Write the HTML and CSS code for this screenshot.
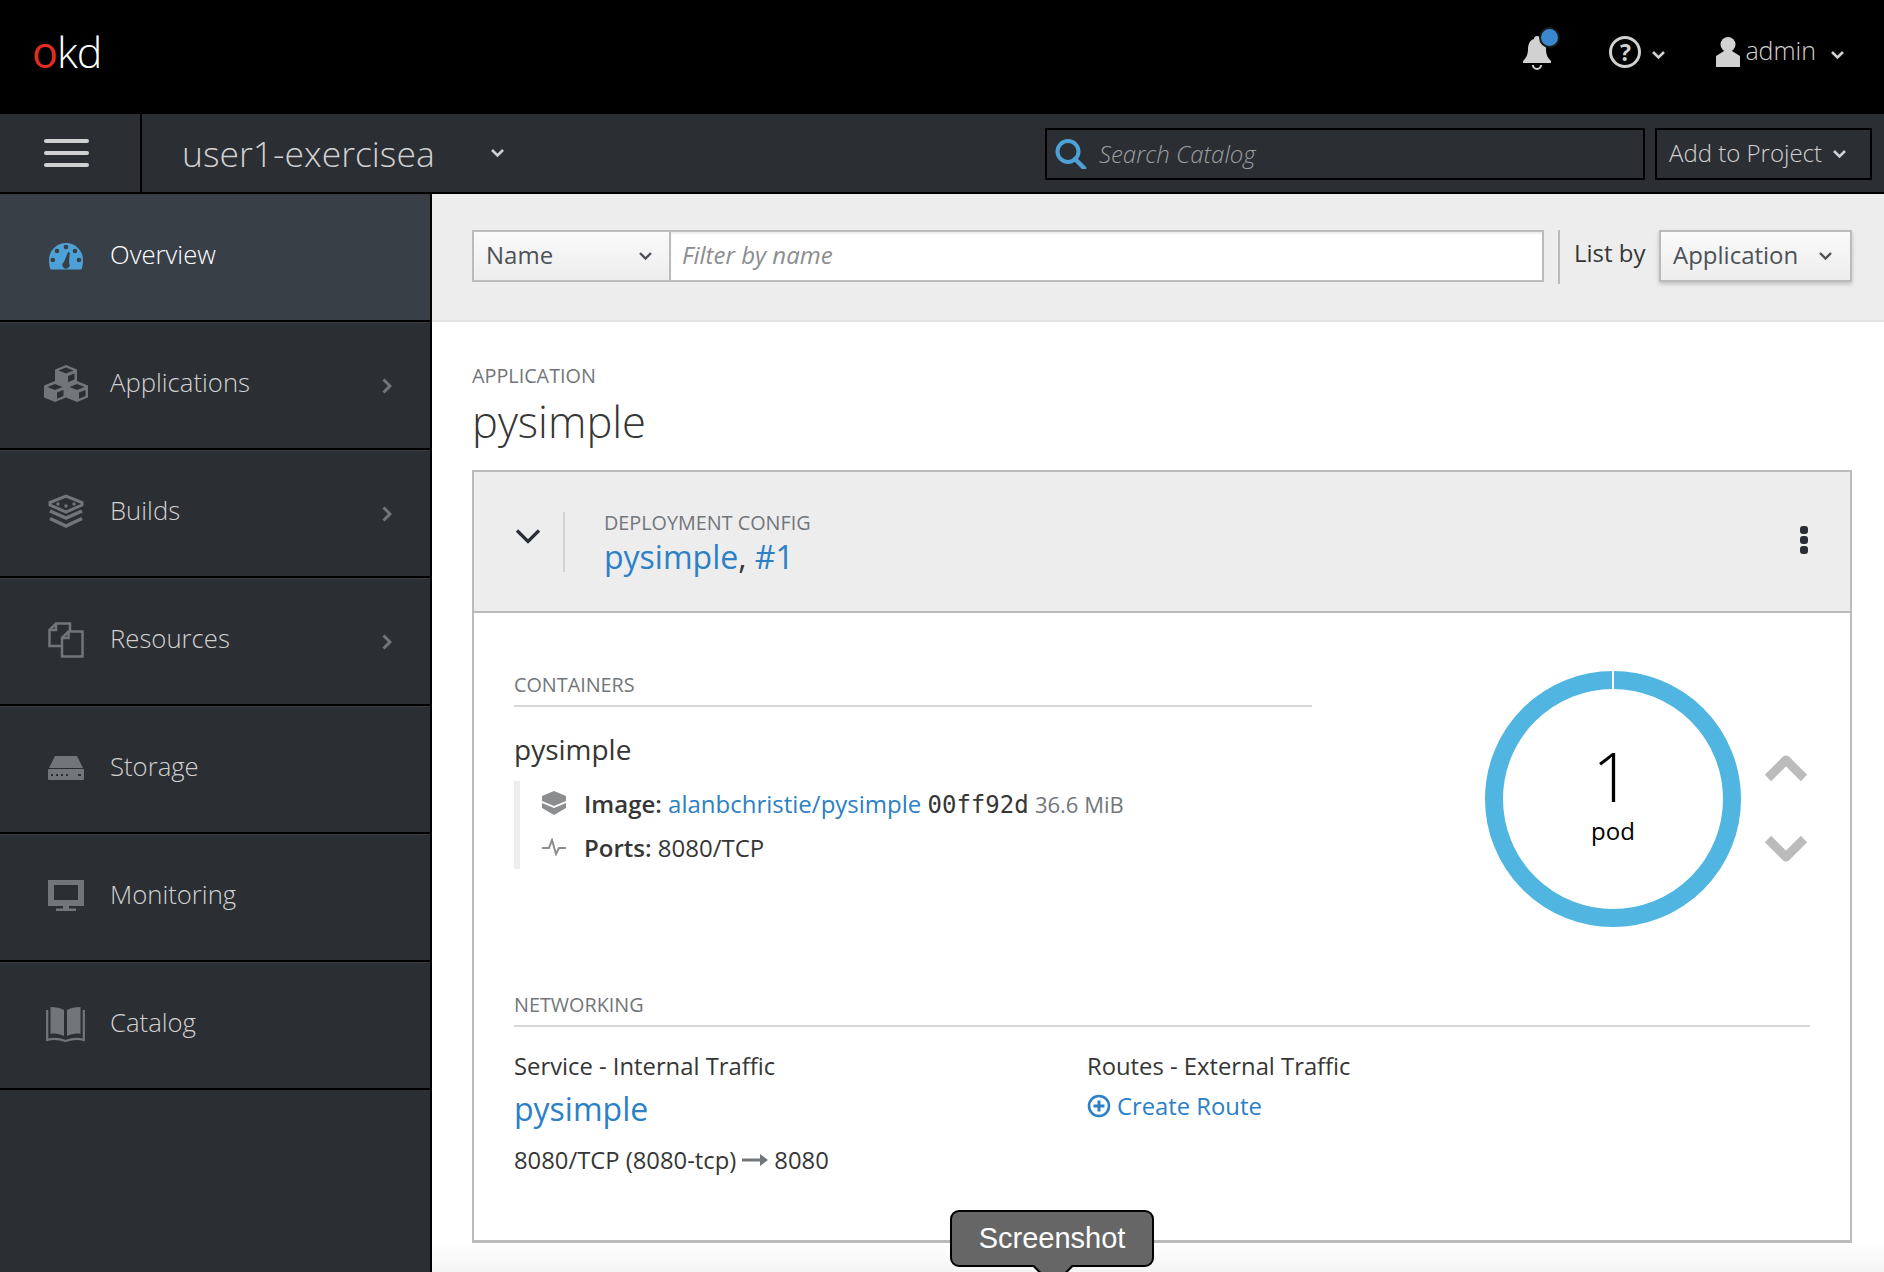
FILE: index.html
```html
<!DOCTYPE html>
<html lang="en">
<head>
<meta charset="utf-8">
<title>OKD Overview</title>
<link rel="stylesheet" href="styles.css">
</head>
<body>
<header class="topbar">
  <div class="logo"><span class="logo-o">o</span>kd</div>
  <div class="top-actions">
    <span class="bell">
      <svg width="32" height="36" viewBox="0 0 32 36"><path fill="#d1d1d1" d="M16 2c2 0 3 1 3 3 5 1 6 5 6 10 0 6 2 9 5 12v2H2v-2c3-3 5-6 5-12 0-5 2-9 6-10 0-2 1-3 3-3z"/><path fill="none" stroke="#d1d1d1" stroke-width="2" d="M12 31a4 4 0 0 0 8 0"/></svg>
      <i class="badge"></i>
    </span>
    <span class="help">
      <span class="help-q">?</span>
      <svg class="caret" width="15" height="10" viewBox="0 0 15 10"><path d="M2 2l5.500 5.500L13 2" fill="none" stroke="#d1d1d1" stroke-width="2.600"/></svg>
    </span>
    <span class="user">
      <svg width="26" height="30" viewBox="0 0 26 30"><circle cx="13" cy="7.500" r="7.500" fill="#d1d1d1"/><path fill="#d1d1d1" d="M9 14h8l8 5v11H1V19z"/></svg>
      <span class="user-name">admin</span>
      <svg class="caret" width="15" height="10" viewBox="0 0 15 10"><path d="M2 2l5.500 5.500L13 2" fill="none" stroke="#d1d1d1" stroke-width="2.600"/></svg>
    </span>
  </div>
</header>
<div class="projectbar">
  <div class="burger"><i></i><i></i><i></i></div>
  <div class="project">
    <span class="project-name">user1-exercisea</span>
    <svg width="15" height="10" viewBox="0 0 15 10"><path d="M2 2l5.500 5.500L13 2" fill="none" stroke="#d1d1d1" stroke-width="2.600"/></svg>
  </div>
  <div class="search">
    <svg width="32" height="30" viewBox="0 0 32 30"><circle cx="13" cy="12.500" r="10.500" fill="none" stroke="#4ea1d6" stroke-width="4"/><path d="M20 20l9 9" stroke="#4ea1d6" stroke-width="4.500" stroke-linecap="round"/></svg>
    <span class="search-text">Search Catalog</span>
  </div>
  <div class="add-project"><span class="add-text">Add to Project</span>
    <svg width="15" height="10" viewBox="0 0 15 10"><path d="M2 2l5.500 5.500L13 2" fill="none" stroke="#d1d1d1" stroke-width="2.600"/></svg>
  </div>
</div>
<div class="layout">
  <nav class="sidebar">
    <a class="nav-item active">
      <span class="nav-icon"><svg width="36" height="28" viewBox="0 0 36 28"><path fill="#4ea1d6" d="M18 1a17 17 0 0 1 17 17c0 3-.5 6-1 8-.3 1-1 1.500-2 1.500H4c-1 0-1.700-.5-2-1.500-.5-2-1-5-1-8A17 17 0 0 1 18 1z"/><g fill="#393f47"><circle cx="18" cy="5" r="2.300"/><circle cx="9" cy="9" r="2.300"/><circle cx="27" cy="9" r="2.300"/><circle cx="4.800" cy="18" r="2.300"/><circle cx="31" cy="18" r="2.300"/><path d="M20 10l1.800.4L21 21a3.600 3.600 0 1 1-5-1z"/></g></svg></span>
      <span class="nav-label">Overview</span>
    </a>
    <a class="nav-item">
      <span class="nav-icon"><svg width="44" height="37" viewBox="0 0 44 37"><path fill="#72767b" d="M22 0l11 4.500V16l11 4.500v12L33 37l-11-4.500L11 37 0 32.500v-12L11 16V4.500z"/><g fill="#2b2e33"><path d="M22 2.500l7.500 3L22 8.500l-7.500-3zM11 19l7.500 3L11 25l-7.500-3zM33 19l7.500 3L33 25l-7.500-3z"/><path d="M24 11l6.500-2.600v6.200L24 17.200zM13 27.500l6.500-2.600v6.200L13 33.700zM35 27.500l6.500-2.600v6.200L35 33.700z"/></g></svg></span>
      <span class="nav-label">Applications</span>
      <svg class="nav-chevron" width="10" height="16" viewBox="0 0 10 16"><path d="M1.500 1.500L8 8l-6.500 6.500" fill="none" stroke="#72767b" stroke-width="3"/></svg>
    </a>
    <a class="nav-item">
      <span class="nav-icon"><svg width="36" height="35" viewBox="0 0 36 35" fill="none" stroke="#72767b" stroke-width="3"><path d="M2 8.500L18 2l16 6.500V11l-16 7-16-7z"/><path stroke-width="3.500" d="M2 17l16 7 16-7M2 24.500L18 32l16-7.500"/><g fill="#72767b" stroke="none"><circle cx="10" cy="10" r="1.700"/><circle cx="18" cy="12" r="1.700"/><circle cx="26" cy="10" r="1.700"/></g></svg></span>
      <span class="nav-label">Builds</span>
      <svg class="nav-chevron" width="10" height="16" viewBox="0 0 10 16"><path d="M1.500 1.500L8 8l-6.500 6.500" fill="none" stroke="#72767b" stroke-width="3"/></svg>
    </a>
    <a class="nav-item">
      <span class="nav-icon"><svg width="36" height="36" viewBox="0 0 36 36" fill="none" stroke="#72767b" stroke-width="2.500"><path d="M14 24H1.500V8L8 1.500h14v8"/><path d="M8 1.500V8H1.500"/><path d="M14 16l6.500-6.500h14v25H14z"/><path d="M20.500 9.500V16H14"/></svg></span>
      <span class="nav-label">Resources</span>
      <svg class="nav-chevron" width="10" height="16" viewBox="0 0 10 16"><path d="M1.500 1.500L8 8l-6.500 6.500" fill="none" stroke="#72767b" stroke-width="3"/></svg>
    </a>
    <a class="nav-item">
      <span class="nav-icon"><svg width="36" height="24" viewBox="0 0 36 24"><path fill="#72767b" d="M7 0h22l6 12H1z"/><rect y="13" width="36" height="11" rx="1" fill="#72767b"/><g fill="#2b2e33"><rect x="3" y="18" width="2" height="2"/><rect x="8" y="18" width="2" height="2"/><rect x="13" y="18" width="2" height="2"/><rect x="18" y="18" width="2" height="2"/><rect x="30" y="18" width="3" height="2"/></g></svg></span>
      <span class="nav-label">Storage</span>
    </a>
    <a class="nav-item">
      <span class="nav-icon"><svg width="36" height="31" viewBox="0 0 36 31"><path fill="#72767b" fill-rule="evenodd" d="M0 0h36v26H0zM6 5v15h24V5z"/><rect x="15" y="25" width="6" height="4" fill="#72767b"/><rect x="8" y="28.500" width="20" height="2.500" fill="#72767b"/></svg></span>
      <span class="nav-label">Monitoring</span>
    </a>
    <a class="nav-item">
      <span class="nav-icon"><svg width="39" height="36" viewBox="0 0 39 36"><path fill="#72767b" d="M4.500 1c5 0 10.500 1 13.500 3v26c-4-2-9.500-3-13.500-2zM34.500 1c-5 0-10.500 1-13.500 3v26c4-2 9.500-3 13.500-2z"/><path fill="none" stroke="#72767b" stroke-width="2.200" d="M1.200 4v30c6-2 12.800-1 18.300 1 5.500-2 12.300-3 18.300-1V4"/></svg></span>
      <span class="nav-label">Catalog</span>
    </a>
  </nav>
  <main class="content">
    <div class="filterbar">
      <div class="filter-select"><span class="ctl-text">Name</span>
        <svg width="15" height="10" viewBox="0 0 15 10"><path d="M2 2l5.500 5.500L13 2" fill="none" stroke="#4d5258" stroke-width="2.400"/></svg>
      </div>
      <div class="filter-input"><span class="ctl-text">Filter by name</span></div>
      <div class="listby">List by</div>
      <div class="listby-btn"><span class="ctl-text">Application</span>
        <svg width="15" height="10" viewBox="0 0 15 10"><path d="M2 2l5.500 5.500L13 2" fill="none" stroke="#4d5258" stroke-width="2.400"/></svg>
      </div>
    </div>
    <div class="page">
      <div class="app-label">APPLICATION</div>
      <h1 class="app-name">pysimple</h1>
      <section class="panel">
        <div class="panel-head">
          <svg class="panel-toggle" width="26" height="17" viewBox="0 0 26 17"><path d="M2 2.500l11 11 11-11" fill="none" stroke="#292e34" stroke-width="3.200"/></svg>
          <div class="panel-title">
            <div class="dc-label">DEPLOYMENT CONFIG</div>
            <div class="dc-name"><a class="link">pysimple</a>, <a class="link">#1</a></div>
          </div>
          <div class="kebab"><i></i><i></i><i></i></div>
        </div>
        <div class="panel-body">
          <div class="row-top">
            <div class="containers">
              <div class="section-label">CONTAINERS</div>
              <div class="container-name">pysimple</div>
              <div class="container-info">
                <div class="info-row">
                  <svg class="info-icon" width="24" height="24" viewBox="0 0 24 24"><path fill="#8b8d8f" d="M12 0l12 5v5l-12 5L0 10V5z"/><path fill="#8b8d8f" d="M0 12l12 5 12-5v5l-12 7-12-7z"/></svg>
                  <span><b>Image:</b> <a class="link">alanbchristie/pysimple</a> <code>00ff92d</code> <span class="muted">36.6 MiB</span></span>
                </div>
                <div class="info-row">
                  <svg class="info-icon" width="24" height="18" viewBox="0 0 24 18"><path fill="none" stroke="#8b8d8f" stroke-width="2" d="M0 10h7l3-8 4 14 3-6h7"/></svg>
                  <span><b>Ports:</b> 8080/TCP</span>
                </div>
              </div>
            </div>
            <div class="scaler">
              <svg class="donut" width="256" height="256" viewBox="0 0 256 256">
                <circle cx="128" cy="128" r="119" fill="none" stroke="#50b5e0" stroke-width="18"/>
                <rect x="127" y="0" width="2" height="18" fill="#fff"/>
                <text x="127" y="131" text-anchor="middle" class="donut-num">1</text>
                <text x="128" y="169" text-anchor="middle" class="donut-unit">pod</text>
              </svg>
              <div class="scale-btns">
                <svg width="44" height="28" viewBox="0 0 44 28"><path d="M4 24L22 6l18 18" fill="none" stroke="#bbb" stroke-width="9" stroke-linejoin="round"/></svg>
                <svg width="44" height="28" viewBox="0 0 44 28"><path d="M4 4l18 18L40 4" fill="none" stroke="#bbb" stroke-width="9" stroke-linejoin="round"/></svg>
              </div>
            </div>
          </div>
          <div class="section-label">NETWORKING</div>
          <div class="net">
            <div class="net-col">
              <div class="net-title">Service - Internal Traffic</div>
              <a class="link net-link">pysimple</a>
              <div class="net-port">8080/TCP (8080-tcp)
                <svg width="26" height="12" viewBox="0 0 26 12"><path d="M0 6h20" stroke="#72767b" stroke-width="3"/><path d="M18 0l8 6-8 6z" fill="#72767b"/></svg>
                8080</div>
            </div>
            <div class="net-col">
              <div class="net-title">Routes - External Traffic</div>
              <a class="link create-route">
                <svg width="24" height="24" viewBox="0 0 24 24"><circle cx="12" cy="12" r="10" fill="none" stroke="#2b80c6" stroke-width="2.600"/><path d="M12 6.500v11M6.500 12h11" stroke="#2b80c6" stroke-width="3"/></svg>
                Create Route</a>
            </div>
          </div>
        </div>
      </section>
    </div>
  </main>
</div>
<div class="shot-tip">Screenshot</div>
</body>
</html>
```

FILE: styles.css
```css
* { box-sizing: border-box; }
html, body { margin: 0; height: 100%; overflow: hidden; }
body { font-family: "Open Sans", sans-serif; font-size: 24px; color: #363636; background: #fff; position: relative; }
a { text-decoration: none; }
i { display: block; }
svg { display: block; flex: none; }

.topbar { height: 114px; background: #000; display: flex; align-items: center; justify-content: space-between; padding: 0 39px 10px 32px; }
.logo { font-weight: 300; font-size: 43px; line-height: 50px; letter-spacing: -1px; color: #fff; }
.logo-o { color: #e12e1f; font-weight: 400; }
.top-actions { display: flex; align-items: center; color: #d1d1d1; }
.bell { position: relative; margin-right: 56px; }
.badge { position: absolute; left: 18px; top: -7px; width: 21px; height: 21px; border-radius: 50%; background: #3a87cd; border: 2px solid #1a1a1a; }
.help { display: flex; align-items: center; margin-right: 49px; }
.help-q { width: 32px; height: 32px; border: 3px solid #d1d1d1; border-radius: 50%; font-weight: 700; font-size: 23px; line-height: 26px; text-align: center; margin-right: 10px; }
.help .caret { margin-top: 6px; }
.user { display: flex; align-items: center; }
.user-name { font-weight: 300; font-size: 25px; margin: -4px 14px 0 4px; }
.user .caret { margin-top: 6px; }

.projectbar { height: 80px; background: #2b2e33; border-bottom: 2px solid #000; display: flex; align-items: center; padding-right: 12px; color: #d1d1d1; }
.burger { width: 142px; height: 78px; border-right: 2px solid #000; display: flex; flex-direction: column; justify-content: center; gap: 8px; padding-left: 44px; }
.burger i { width: 45px; height: 4px; border-radius: 2px; background: #d1d1d1; }
.project { width: 903px; display: flex; align-items: center; padding-left: 40px; }
.project-name { font-weight: 300; font-size: 35.500px; width: 308px; }
.search { flex: 1; height: 52px; margin-top: 2px; border: 2px solid #000; display: flex; align-items: center; padding-left: 8px; gap: 12px; }
.search-text { font-style: italic; font-weight: 300; color: #9c9ea0; margin-top: -2px; }
.add-project { width: 217px; height: 52px; margin: 2px 0 0 10px; border: 2px solid #000; display: flex; align-items: center; justify-content: space-between; padding: 0 23px 0 12px; font-weight: 300; }
.add-text { margin-top: -3px; }

.layout { display: flex; height: 1078px; }
.sidebar { width: 432px; flex: none; background: #2b2e33; border-right: 2px solid #000; }
.nav-item { height: 128px; display: flex; align-items: center; border-bottom: 2px solid #000; color: #d1d1d1; font-weight: 300; font-size: 25.700px; box-shadow: inset 0 1px 0 #363a40; padding-right: 38px; }
.nav-item.active { background: #393f47; color: #fff; }
.nav-icon { width: 110px; display: flex; justify-content: center; padding-left: 21px; margin-top: -3px; }
.nav-label { flex: 1; margin-top: -5px; }
.nav-chevron { margin-top: 2px; }

.content { flex: 1; min-width: 0; display: flex; flex-direction: column; background: linear-gradient(#fff 1047px, #f5f5f5); }
.filterbar { height: 128px; flex: none; background: #ededed; border-bottom: 2px solid #e3e3e3; display: flex; align-items: flex-start; padding: 36px 0 0 40px; color: #4d5258; }
.ctl-text { margin-top: -3px; }
.filter-select { width: 199px; height: 52px; border: 2px solid #bbb; background: linear-gradient(#fafafa, #ededed); display: flex; align-items: center; justify-content: space-between; padding: 0 16px 0 12px; }
.filter-input { width: 873px; height: 52px; border: 2px solid #bbb; border-left-width: 0; background: #fff; box-shadow: inset 0 2px 2px #eee; display: flex; align-items: center; padding-left: 11px; font-style: italic; color: #8b8d8f; font-weight: 400; }
.listby { margin-left: 14px; height: 54px; border-left: 2px solid #bbb; padding: 0 0 0 14px; line-height: 46px; color: #363636; width: 101px; }
.listby-btn { width: 193px; height: 52px; border: 2px solid #bbb; border-radius: 1px; background: linear-gradient(#fafafa, #ededed); box-shadow: 0 2px 4px rgba(0,0,0,.2); display: flex; align-items: center; justify-content: space-between; padding: 0 17px 0 12px; }

.page { padding: 40px 32px 0 40px; }
.app-label { font-size: 19.800px; line-height: 28px; color: #72767b; }
.app-name { margin: 0; font-weight: 300; font-size: 43.500px; line-height: 56px; color: #363636; height: 66px; padding-top: 4px; }
.panel { height: 773px; border: 2px solid #bbb; border-bottom-width: 3px; margin-top: 14px; background: #fff; }
.panel-head { height: 141px; background: #ededed; border-bottom: 2px solid #bbb; display: flex; align-items: flex-start; padding: 40px 42px 0 41px; }
.panel-toggle { margin-top: 16px; margin-right: 22px; }
.panel-title { border-left: 2px solid #d1d1d1; height: 60px; padding-left: 39px; flex: 1; }
.dc-label { font-size: 19.800px; line-height: 28px; color: #72767b; margin-top: -3px; }
.dc-name { font-size: 32px; line-height: 40px; color: #363636; }
.link { color: #2b80c6; }
.kebab { display: flex; flex-direction: column; gap: 2px; margin-top: 14px; }
.kebab i { width: 8px; height: 8px; border-radius: 3px; background: #292e34; }

.panel-body { padding: 0 40px; }
.row-top { height: 377px; display: flex; justify-content: space-between; }
.containers { width: 798px; padding-top: 57px; }
.section-label { font-size: 19.800px; line-height: 28px; color: #72767b; border-bottom: 2px solid #d8d8d8; padding: 1px 0 5px; height: 37px; }
.container-name { font-size: 28px; line-height: 38px; margin-top: 23px; }
.container-info { margin-top: 13px; height: 88px; border-left: 6px solid #ededed; padding-left: 22px; display: flex; flex-direction: column; }
.info-row { height: 44px; display: flex; align-items: center; gap: 18px; color: #363636; }
.info-row .info-icon { flex: none; }
.info-row b { font-weight: 600; }
code { font-family: "DejaVu Sans Mono", monospace; font-size: 24px; }
.muted { color: #72767b; font-size: 22px; }
.scaler { display: flex; align-items: flex-start; margin: 58px 2px 0 0; }
.scale-btns { display: flex; flex-direction: column; gap: 53px; margin: 83px 0 0 23px; }
.donut-num { font-size: 68px; font-weight: 300; fill: #000; font-family: "Open Sans", sans-serif; }
.donut-unit { font-size: 24px; fill: #000; font-family: "Open Sans", sans-serif; }

.net { display: flex; margin-top: 23px; color: #363636; font-size: 23.800px; }
.net-col { width: 573px; }
.net-title { line-height: 32px; }
.net-link { display: block; font-size: 32px; line-height: 44px; margin-top: 5px; }
.net-port { display: flex; align-items: center; gap: 6px; line-height: 32px; margin-top: 13px; }
.create-route { display: flex; align-items: center; gap: 6px; line-height: 32px; margin-top: 8px; }

.shot-tip { position: absolute; left: 950px; top: 1210px; width: 204px; height: 57px; border: 2px solid #000; border-radius: 9px; background: #666; color: #fff; font-family: "Liberation Sans", sans-serif; font-size: 29px; line-height: 52px; text-align: center; }
.shot-tip::after { content: ""; position: absolute; left: 87px; top: 41px; width: 26px; height: 26px; background: #666; border: 2px solid #000; border-width: 0 2px 2px 0; transform: rotate(45deg); }
```
